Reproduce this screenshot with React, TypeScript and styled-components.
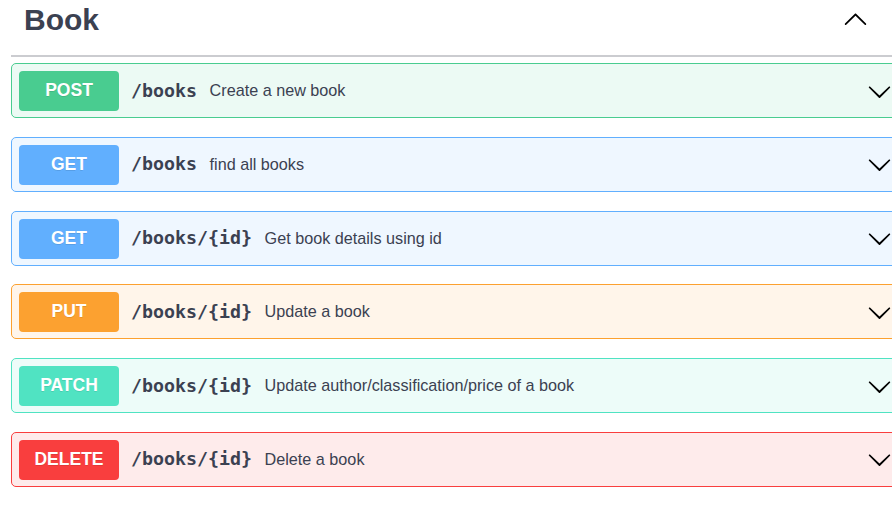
import React from "react";
import styled, { createGlobalStyle } from "styled-components";

const GlobalStyle = createGlobalStyle`
  body {
    margin: 0;
    background: #fff;
    overflow: hidden;
    font-family: "Liberation Sans", Arial, sans-serif;
    color: #3b4151;
  }
`;

const Section = styled.section`
  width: 889px;
  padding-left: 11px;
`;

const TagHeader = styled.div`
  display: flex;
  align-items: center;
  height: 40px;
  padding: 0 32px 15px 13px;
  border-bottom: 2px solid #cbccd0;
  margin-bottom: 6px;
`;

const TagTitle = styled.h3`
  flex: 1;
  margin: 0;
  font-size: 30px;
  line-height: 40px;
  font-weight: 700;
  color: #3b4151;
`;

const Arrow = styled.svg<{ $lift?: boolean }>`
  width: 25px;
  height: 25px;
  flex: none;
  margin-bottom: ${(p) => (p.$lift ? "4px" : "0")};
`;

interface MethodTheme {
  color: string;
  bg: string;
}

const methods: Record<string, MethodTheme> = {
  POST: { color: "#49cc90", bg: "rgba(73, 204, 144, 0.1)" },
  GET: { color: "#61affe", bg: "rgba(97, 175, 254, 0.1)" },
  PUT: { color: "#fca130", bg: "rgba(252, 161, 48, 0.1)" },
  PATCH: { color: "#50e3c2", bg: "rgba(80, 227, 194, 0.1)" },
  DELETE: { color: "#f93e3e", bg: "rgba(249, 62, 62, 0.1)" },
};

const OpBlock = styled.div<{ $theme: MethodTheme }>`
  display: flex;
  align-items: center;
  box-sizing: border-box;
  height: 55px;
  padding: 7px 7px 6px 7px;
  margin-bottom: 18.8px;
  border: 1px solid ${(p) => p.$theme.color};
  border-radius: 5px;
  background: ${(p) => p.$theme.bg};
`;

const Method = styled.span<{ $theme: MethodTheme }>`
  flex: none;
  width: 100px;
  height: 40px;
  line-height: 38px;
  border-radius: 4px;
  background: ${(p) => p.$theme.color};
  color: #fff;
  font-size: 17.5px;
  font-weight: 700;
  text-align: center;
  text-shadow: 0 1px 0 rgba(0, 0, 0, 0.1);
`;

const Path = styled.span`
  flex: none;
  padding: 0 12.5px 2px 12px;
  font-family: "DejaVu Sans Mono", monospace;
  font-size: 18.3px;
  font-weight: 700;
  color: #3b4151;
`;

const Description = styled.span`
  flex: 1;
  padding-bottom: 1px;
  font-size: 16.2px;
  color: #3b4151;
`;

const downPath =
  "M17.418 6.109c.272-.268.709-.268.979 0s.271.701 0 .969l-7.908 7.83c-.27.268-.707.268-.979 0l-7.908-7.83c-.27-.268-.27-.701 0-.969.271-.268.709-.268.979 0L10 13.25l7.418-7.141z";
const upPath =
  "M17.418 14.908c.272.268.709.268.979 0s.271-.701 0-.969l-7.908-7.83c-.27-.268-.707-.268-.979 0l-7.908 7.83c-.27.268-.27.701 0 .969.271.268.709.268.979 0L10 7.767l7.418 7.141z";

const operations = [
  { method: "POST", path: "/books", summary: "Create a new book" },
  { method: "GET", path: "/books", summary: "find all books" },
  { method: "GET", path: "/books/{id}", summary: "Get book details using id" },
  { method: "PUT", path: "/books/{id}", summary: "Update a book" },
  {
    method: "PATCH",
    path: "/books/{id}",
    summary: "Update author/classification/price of a book",
  },
  { method: "DELETE", path: "/books/{id}", summary: "Delete a book" },
];

const App = () => {
  return (
    <>
      <GlobalStyle />
      <Section>
        <TagHeader>
          <TagTitle>Book</TagTitle>
          <Arrow $lift viewBox="0 0 20 20">
            <path d={upPath} fill="#000" />
          </Arrow>
        </TagHeader>

        {operations.map((op, i) => {
          const theme = methods[op.method];
          return (
            <OpBlock key={i} $theme={theme}>
              <Method $theme={theme}>{op.method}</Method>
              <Path>{op.path}</Path>
              <Description>{op.summary}</Description>
              <Arrow viewBox="0 0 20 20">
                <path d={downPath} fill="#000" />
              </Arrow>
            </OpBlock>
          );
        })}
      </Section>
    </>
  );
};

export default App;
